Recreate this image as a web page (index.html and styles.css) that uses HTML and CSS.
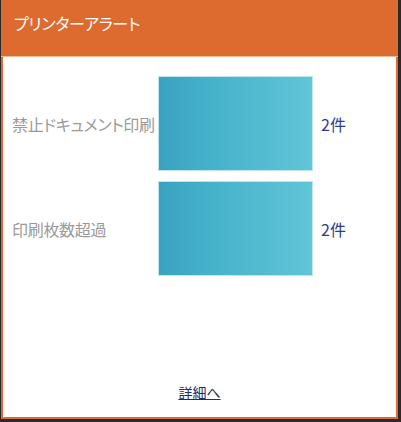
FILE: index.html
```html
<!DOCTYPE html>
<html lang="ja">
<head>
<meta charset="utf-8">
<link rel="stylesheet" href="styles.css">
</head>
<body>
<div class="frame">
  <div class="card">
    <div class="header">プリンターアラート</div>
    <div class="rows">
      <div class="row">
        <div class="label">禁止ドキュメント印刷</div>
        <div class="bar"></div>
        <div class="count">2件</div>
      </div>
      <div class="row">
        <div class="label">印刷枚数超過</div>
        <div class="bar"></div>
        <div class="count">2件</div>
      </div>
    </div>
    <div class="footer"><a class="link" href="#">詳細へ</a></div>
  </div>
</div>
</body>
</html>
```
FILE: styles.css
```css
html, body {
  margin: 0;
  padding: 0;
}
body {
  width: 401px;
  height: 422px;
  background: #2a2a2a;
  font-family: "Noto Sans CJK JP", "Noto Sans", sans-serif;
  font-feature-settings: "palt";
}
.frame {
  box-sizing: border-box;
  width: 401px;
  height: 422px;
  padding: 0 3px 3px 1px;
}
.card {
  box-sizing: border-box;
  width: 100%;
  height: 100%;
  background: #ffffff;
  border: 2px solid #dd6b2f;
  border-top: 0;
  display: flex;
  flex-direction: column;
}
.header {
  box-sizing: border-box;
  height: 57px;
  background: #dd6b2f;
  border-bottom: 1px solid #f2b995;
  color: #ffffff;
  font-size: 16px;
  line-height: 20px;
  padding: 13px 0 0 13px;
  margin: 0 -2px;
  letter-spacing: -0.2px;
}
.rows {
  display: flex;
  flex-direction: column;
  gap: 10px;
  padding-top: 19px;
}
.row {
  display: flex;
  align-items: center;
  height: 95px;
}
.label {
  width: 146px;
  padding-left: 9px;
  color: #9a9a9a;
  font-size: 16px;
  letter-spacing: -0.3px;
  white-space: nowrap;
}
.bar {
  width: 155px;
  height: 95px;
  box-sizing: border-box;
  border: 1px solid #bfe6ee;
  background: linear-gradient(90deg, #3aa2c1 0%, #45b2cb 35%, #62c5d8 100%);
}
.count {
  margin-left: 8px;
  color: #2f3b8f;
  font-size: 16px;
}
.footer {
  margin-top: auto;
  padding-bottom: 14px;
  text-align: center;
}
.link {
  color: #1f2d63;
  font-size: 14px;
  line-height: 20px;
  text-decoration: underline;
}
```
